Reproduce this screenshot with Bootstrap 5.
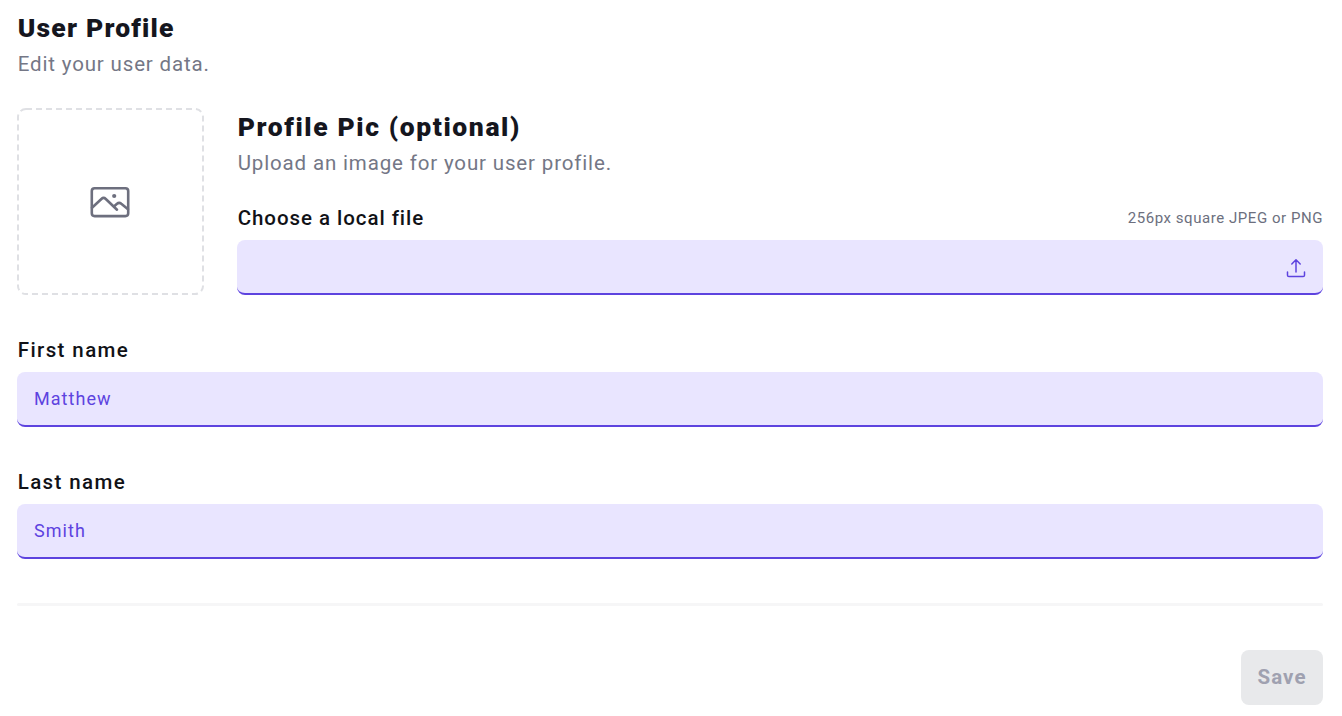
<!DOCTYPE html>
<html lang="en">
<head>
<meta charset="utf-8">
<meta name="viewport" content="width=device-width, initial-scale=1">
<title>User Profile</title>
<link href="https://cdn.jsdelivr.net/npm/bootstrap@5.3.0/dist/css/bootstrap.min.css" rel="stylesheet">
<style>
  body { font-family: Roboto, "Liberation Sans", sans-serif; color: #15161e; background: #fff; }
  .profile-form { padding: 10px 19px 11px 17px; }
  .section-title { font-size: 26.5px; line-height: 36px; font-weight: 900; letter-spacing: 1.2px; }
  .profile-pic .section-title { letter-spacing: 1.6px; }
  .section-note { font-size: 20.5px; line-height: 36px; font-weight: 400; letter-spacing: .85px; color: #747786; }
  .section-title, .section-note, .form-label { text-indent: .7px; }
  .avatar-drop { width: 187px; height: 187px; color: #6d6f7e; }
  .profile-pic { gap: 33px; margin-top: 26px; margin-bottom: 41px; }
  .pic-fields { padding-top: 1px; }
  .file-label-row { margin-top: 23px; }
  .form-label { font-size: 20.5px; line-height: 28px; font-weight: 500; letter-spacing: .95px; color: #111217; }
  .name-field .form-label { letter-spacing: 1.4px; }
  .file-hint { font-size: 15px; letter-spacing: .55px; color: #6c6f7e; }
  .form-control, .form-control:focus {
    height: 55px; padding: 0 17px; border: 0; border-bottom: 2px solid #5d43df; border-radius: 8px;
    background: #e9e5ff; color: #5d43df; font-size: 18px; letter-spacing: 1.05px; box-shadow: none;
  }
  .name-field + .name-field { margin-top: 41px; }
  .divider { height: 3px; margin: 44px 0; background: #f6f6f7; border-radius: 2px; }
  .btn-save { width: 82px; height: 55px; padding: 0; border: 0; border-radius: 8px; font-size: 20.5px; font-weight: 700; letter-spacing: 1.1px; }
  .btn-save:disabled { background: #e8e9eb; color: #9fa1b0; opacity: 1; }
</style>
</head>
<body>
<form class="profile-form">
  <header>
    <h1 class="section-title mb-0">User Profile</h1>
    <p class="section-note mb-0">Edit your user data.</p>
  </header>

  <section class="profile-pic d-flex">
    <div class="avatar-drop position-relative d-flex align-items-center justify-content-center flex-shrink-0">
      <svg class="position-absolute top-0 start-0" width="187" height="187" fill="none" aria-hidden="true">
        <rect x="1" y="1" width="185" height="185" rx="8" stroke="#dfe0e4" stroke-width="2" stroke-dasharray="6 4"/>
      </svg>
      <svg width="41" height="32" viewBox="0 0 41 32" fill="none" stroke="currentColor" stroke-width="2.6" stroke-linecap="round" stroke-linejoin="round" aria-hidden="true">
        <rect x="1.8" y="2.3" width="36.4" height="27.8" rx="2.8"/>
        <path d="M2 21.7l9.4-8.7a3.2 3.2 0 0 1 4.4 0L27 23.7M24.2 20.2l2.8-2.4a3.2 3.2 0 0 1 4.3 0L38 23.3"/>
        <circle cx="24.2" cy="10" r="2.1" fill="currentColor" stroke="none"/>
      </svg>
    </div>
    <div class="pic-fields flex-grow-1">
      <h2 class="section-title mb-0">Profile Pic (optional)</h2>
      <p class="section-note mb-0">Upload an image for your user profile.</p>
      <div class="file-label-row d-flex justify-content-between align-items-center">
        <label class="form-label mb-0" for="picture">Choose a local file</label>
        <span class="file-hint">256px square JPEG or PNG</span>
      </div>
      <div class="position-relative mt-2">
        <input class="form-control" id="picture" type="text" readonly>
        <svg class="position-absolute top-0 end-0 mt-3 me-3" width="22" height="24" viewBox="0 0 22 24" fill="none" stroke="#5d43df" stroke-width="1.5" stroke-linecap="round" stroke-linejoin="round" aria-hidden="true">
          <path d="M11 16V4M6.8 8L11 3.8 15.2 8M2.5 16v3.2c0 .8.6 1.3 1.4 1.3h14.2c.8 0 1.4-.5 1.4-1.3V16"/>
        </svg>
      </div>
    </div>
  </section>

  <div class="name-field">
    <label class="form-label d-block mb-2" for="first">First name</label>
    <input class="form-control" id="first" type="text" value="Matthew">
  </div>
  <div class="name-field">
    <label class="form-label d-block mb-2" for="last">Last name</label>
    <input class="form-control" id="last" type="text" value="Smith">
  </div>

  <div class="divider" role="separator"></div>

  <div class="d-flex justify-content-end">
    <button class="btn btn-save" type="submit" disabled>Save</button>
  </div>
</form>
<script src="https://cdn.jsdelivr.net/npm/bootstrap@5.3.0/dist/js/bootstrap.bundle.min.js"></script>
</body>
</html>
